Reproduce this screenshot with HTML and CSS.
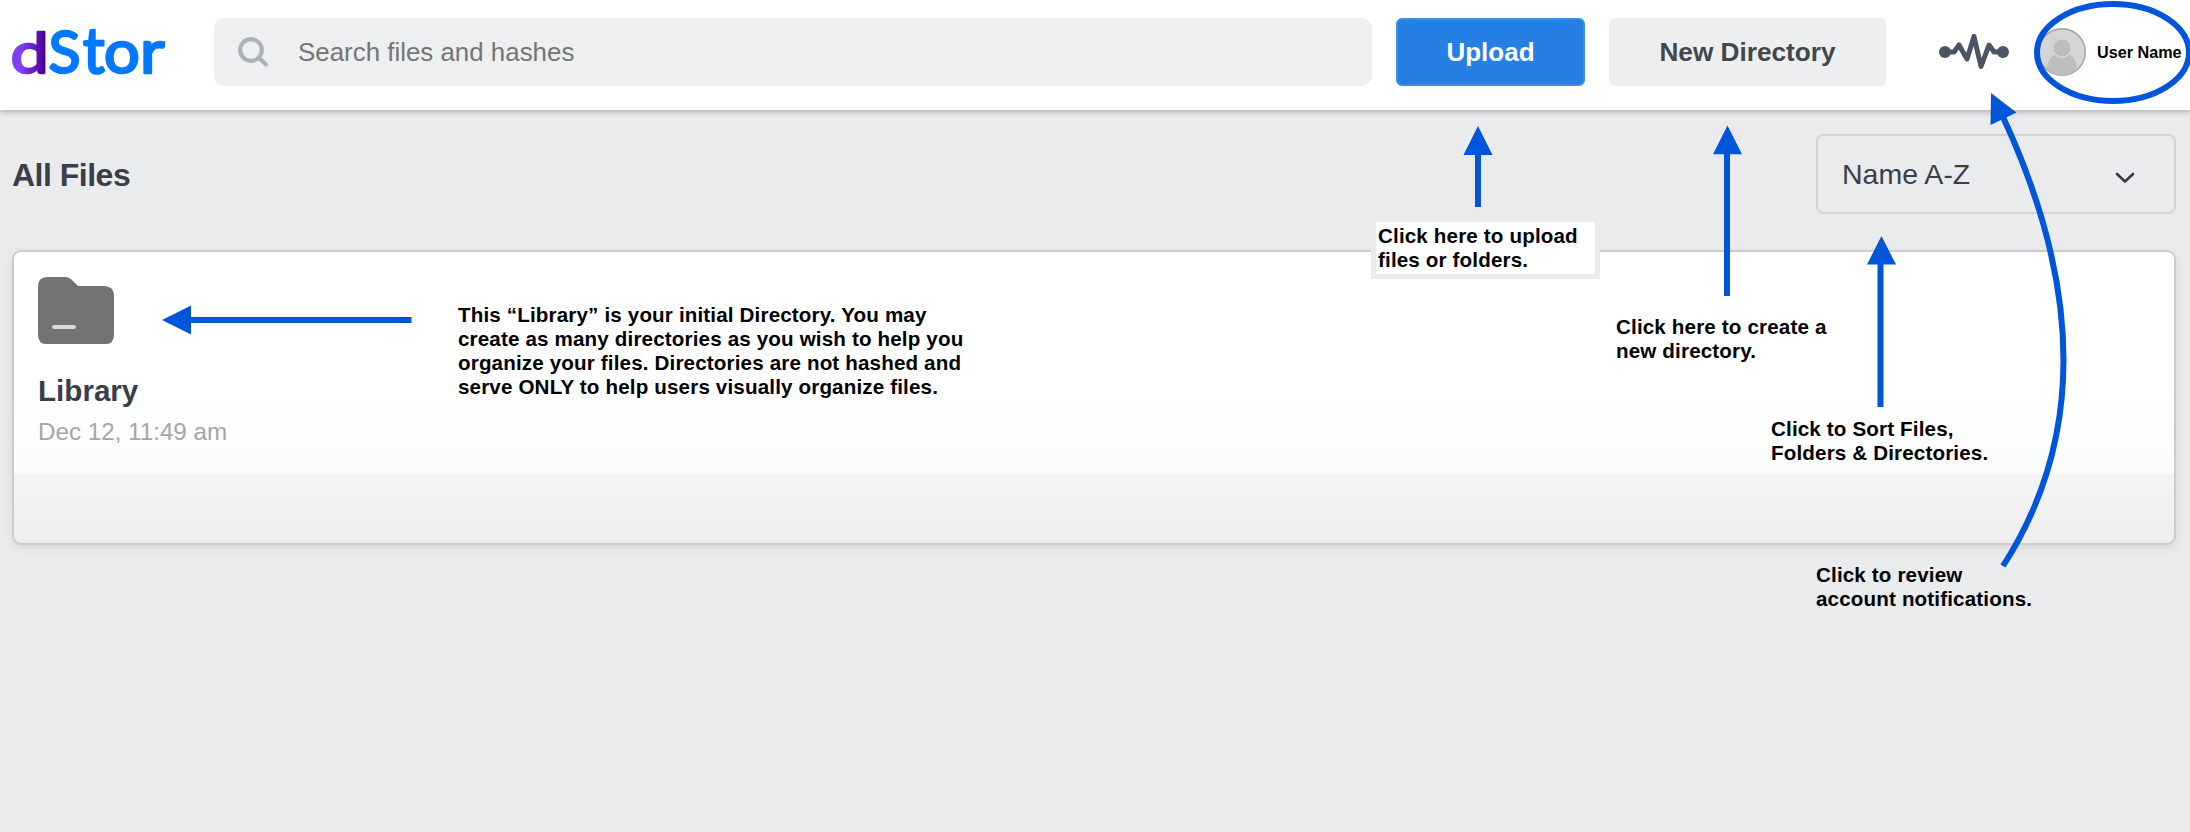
FILE: index.html
```html
<!DOCTYPE html>
<html lang="en">
<head>
<meta charset="utf-8">
<title>dStor</title>
<link rel="stylesheet" href="styles.css">
</head>
<body>
<header class="topbar">
  <svg class="logo" width="170" height="90" viewBox="0 0 170 90">
    <defs><linearGradient id="purple" x1="0" y1="0" x2="1" y2="0"><stop offset="0.3" stop-color="#7e3ff0"/><stop offset="0.9" stop-color="#4a0096"/></linearGradient></defs>
    <g class="logo-text">
      <text class="logo-d" transform="translate(10.500 66) scale(1.180 .97)">d</text>
      <text transform="translate(48.500 66) scale(1.020 1)">S</text>
      <text transform="translate(83 66) scale(1.040 1.100)">t</text>
      <text transform="translate(104 66) scale(1.090 1.020)">o</text>
      <text transform="translate(140 66) scale(1.160 1.020)">r</text>
    </g>
  </svg>
  <div class="search">
    <svg class="search-icon" width="34" height="34" viewBox="0 0 34 34"><circle cx="14" cy="15" r="10.800"/><path d="M22.500 23.500l6.500 6"/></svg>
    <span class="search-text">Search files and hashes</span>
  </div>
  <button class="btn btn-upload"><span>Upload</span></button>
  <button class="btn btn-new"><span>New Directory</span></button>
  <svg class="pulse" width="70" height="36" viewBox="0 0 70 36"><circle cx="6" cy="18" r="6"/><circle cx="64" cy="18" r="6"/><path d="M6 18h9l5-7 8 14 7-22.500 7 30 8-21.500 5 7h9"/></svg>
  <div class="account">
    <svg class="avatar" width="50" height="50" viewBox="0 0 50 50"><circle class="av-bg" cx="25" cy="25" r="23.300"/><circle class="av-fg" cx="25" cy="21" r="8.500"/><path class="av-fg" d="M10 43c0-8 3-13 7.500-15 4.500 4 10.500 4 15 0 4.500 2 7.500 7 7.500 15-8 5.500-22 5.500-30 0z"/></svg>
    <span class="user">User Name</span>
  </div>
</header>
<main class="content">
  <div class="toolbar">
    <h1 class="title"><span>All Files</span></h1>
    <div class="select"><span>Name A-Z</span><svg width="20" height="12" viewBox="0 0 20 12"><path d="M2 2l8 7.500 8-7.500"/></svg></div>
  </div>
  <section class="panel">
    <div class="item">
      <svg class="folder" width="76" height="67" viewBox="0 0 76 67"><path d="M9 0h19q3 0 5.500 2.500L40 9h26q10 0 10 10v38q0 10-8 10H8q-8 0-8-10V10Q0 0 9 0z"/><rect x="14" y="48" width="24" height="4" rx="2"/></svg>
      <div class="name"><span>Library</span></div>
      <div class="date"><span>Dec 12, 11:49 am</span></div>
    </div>
  </section>
</main>
<svg class="arrows" width="2190" height="832" viewBox="0 0 2190 832">
  <path class="head" d="M162 320l29-14.500v29zM1478 126l14.500 29h-29zM1727.500 125.500l14.500 28.700h-29zM1881.500 236l14.500 28.500h-29zM1991 93l25.500 19.500-26 12.500z"/>
  <path class="line" d="M190 320H411.500M1478 154V207M1727 153V296M1880.500 263V407M2003 117Q2124 378 2003 566"/>
  <ellipse class="line" cx="2113" cy="52.500" rx="76" ry="48.500"/>
</svg>
<p class="note note-library">This “Library” is your initial Directory. You may<br>create as many directories as you wish to help you<br>organize your files. Directories are not hashed and<br>serve ONLY to help users visually organize files.</p>
<p class="note note-upload">Click here to upload<br>files or folders.</p>
<p class="note note-new">Click here to create a<br>new directory.</p>
<p class="note note-sort">Click to Sort Files,<br>Folders &amp; Directories.</p>
<p class="note note-review">Click to review<br>account notifications.</p>
</body>
</html>
```
FILE: styles.css
```css
* { box-sizing: border-box; }
body { margin: 0; height: 832px; overflow: hidden; position: relative; background: #eaebed; font-family: "Liberation Sans", Arial, sans-serif; }
.topbar { display: flex; align-items: center; height: 110px; padding: 18px 0 24px; background: #fff; box-shadow: 0 1px 6px 1px rgba(0,0,0,.25); position: relative; }
.logo { flex: none; margin: -11px 44px -11px 0; }
.logo-text { font: 400 58px Lato, sans-serif; fill: #0078ff; stroke: #0078ff; stroke-width: 2.4; stroke-linejoin: round; }
.logo-d { fill: url(#purple); stroke: url(#purple); }
.search { display: flex; align-items: center; width: 1158px; height: 68px; padding-left: 23px; border-radius: 10px; background: #eeeff1; margin-right: 24px; flex: none; }
.search-icon { fill: none; stroke: #acb2ba; stroke-width: 4.2; stroke-linecap: round; margin-right: 27px; }
.search-text { font-size: 25.9px; color: #757575; }
.btn { height: 68px; border: 0; border-radius: 6px; padding: 0; font: 700 26px "Liberation Sans", Arial, sans-serif; flex: none; }
.btn-upload { width: 189px; background: #2680e3; border: 2px solid #3a8de8; color: #fff; margin-right: 24px; }
.btn-new { width: 277px; background: #edeef0; color: #444749; margin-right: 53px; font-size: 26.2px; }
.pulse { flex: none; fill: #4b5464; margin-right: 28px; }
.pulse path { fill: none; stroke: #4b5464; stroke-width: 5; stroke-linejoin: round; }
.account { display: flex; align-items: center; flex: none; }
.av-bg { fill: #d5d5d5; stroke: #a3a3a3; stroke-width: 1.5; }
.av-fg { fill: #bdbdbd; }
.user { font-size: 16.2px; font-weight: 700; color: #000; margin-left: 10px; white-space: nowrap; }
.content { padding: 24px 14px 0 12px; }
.toolbar { display: flex; justify-content: space-between; align-items: center; height: 80px; margin-bottom: 36px; }
.title { margin: 0; padding-top: 2px; font-size: 32px; letter-spacing: -.5px; font-weight: 700; color: #3a3e4c; }
.select { display: flex; align-items: center; justify-content: space-between; width: 360px; height: 80px; border: 2px solid #d2d4d4; border-radius: 7px; padding: 0 39px 0 24px; font-size: 28.5px; color: #3b3f4c; }
.select svg { fill: none; stroke: #36393e; stroke-width: 2.6; stroke-linecap: round; stroke-linejoin: round; margin-top: 7px; }
.panel { height: 295px; border: 2px solid #cbcccd; border-radius: 9px; padding: 25px 24px; background: linear-gradient(#fff 0%, #fff 45%, #fafbfb 76.3%, #f4f4f4 76.3%, #eee 100%); box-shadow: 0 3px 8px rgba(0,0,0,.09); }
.item { display: flex; flex-direction: column; align-items: flex-start; }
.folder path { fill: #737373; }
.folder rect { fill: #dcdcdc; }
.name { margin-top: 29px; line-height: 36px; font-size: 29.6px; font-weight: 700; color: #3a3e4c; }
.date { margin-top: 5px; line-height: 36px; font-size: 24.2px; color: #a6a6a6; }
.arrows { position: absolute; left: 0; top: 0; z-index: 2; }
.head { fill: #0055d9; }
.line { fill: none; stroke: #0055d9; stroke-width: 6; }
.note { position: absolute; z-index: 1; margin: 0; font-size: 20.6px; letter-spacing: .15px; line-height: 24px; font-weight: 700; color: #000; white-space: nowrap; }
.note-library { left: 458px; top: 303px; }
.note-upload { left: 1371px; top: 218px; width: 229px; height: 61px; padding: 2px 0 0 2px; border: solid #ebebeb; border-width: 4px 5px 5px; background: #fff; }
.note-new { left: 1616px; top: 315px; }
.note-sort { left: 1771px; top: 417px; }
.note-review { left: 1816px; top: 563px; }
```
